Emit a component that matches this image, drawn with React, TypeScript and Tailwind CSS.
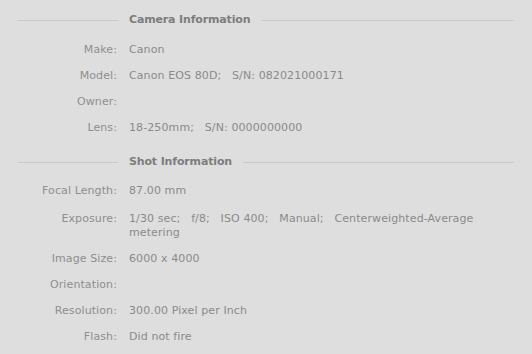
import React from "react";

type Row = { label: string; value?: string; extra?: boolean };

const camera: Row[] = [
  { label: "Make", value: "Canon" },
  { label: "Model", value: "Canon EOS 80D;\u00a0\u00a0\u00a0S/N: 082021000171" },
  { label: "Owner" },
  { label: "Lens", value: "18-250mm;\u00a0\u00a0\u00a0S/N: 0000000000" },
];

const shot: Row[] = [
  { label: "Focal Length", value: "87.00 mm" },
  {
    label: "Exposure",
    value: "1/30 sec;\u00a0\u00a0\u00a0f/8;\u00a0\u00a0\u00a0ISO 400;\u00a0\u00a0\u00a0Manual;\u00a0\u00a0\u00a0Centerweighted-Average metering",
    extra: true,
  },
  { label: "Image Size", value: "6000 x 4000" },
  { label: "Orientation" },
  { label: "Resolution", value: "300.00 Pixel per Inch" },
  { label: "Flash", value: "Did not fire" },
];

function SectionHeader({ title }: { title: string }) {
  return (
    <div className="flex items-center h-[14px]">
      <div className="w-[100px] h-px bg-[#c9c9c9]" />
      <div className="px-[11px] font-bold text-[#7d7d7d] tracking-[-0.15px]">{title}</div>
      <div className="flex-1 h-px bg-[#c9c9c9]" />
    </div>
  );
}

function InfoRows({ rows }: { rows: Row[] }) {
  return (
    <div className="flex flex-col gap-[12px]">
      {rows.map((r) => (
        <div key={r.label} className={r.extra ? "flex mt-[2px]" : "flex"}>
          <div className="w-[99px] shrink-0 text-right text-[#8e8e8e]">{r.label}:</div>
          <div className="ml-[12px] w-[360px] text-[#8a8a8a]">{r.value ?? "\u00a0"}</div>
        </div>
      ))}
    </div>
  );
}

export default function App() {
  return (
    <div
      className="w-[532px] h-[354px] bg-[#dedede] pl-[18px] pr-[18px] pt-[13px] text-[11px] leading-[14px] tracking-[0.1px]"
      style={{ fontFamily: '"DejaVu Sans", sans-serif' }}
    >
      <SectionHeader title="Camera Information" />
      <div className="mt-[16px]">
        <InfoRows rows={camera} />
      </div>
      <div className="mt-[20px]">
        <SectionHeader title="Shot Information" />
      </div>
      <div className="mt-[15px]">
        <InfoRows rows={shot} />
      </div>
    </div>
  );
}
